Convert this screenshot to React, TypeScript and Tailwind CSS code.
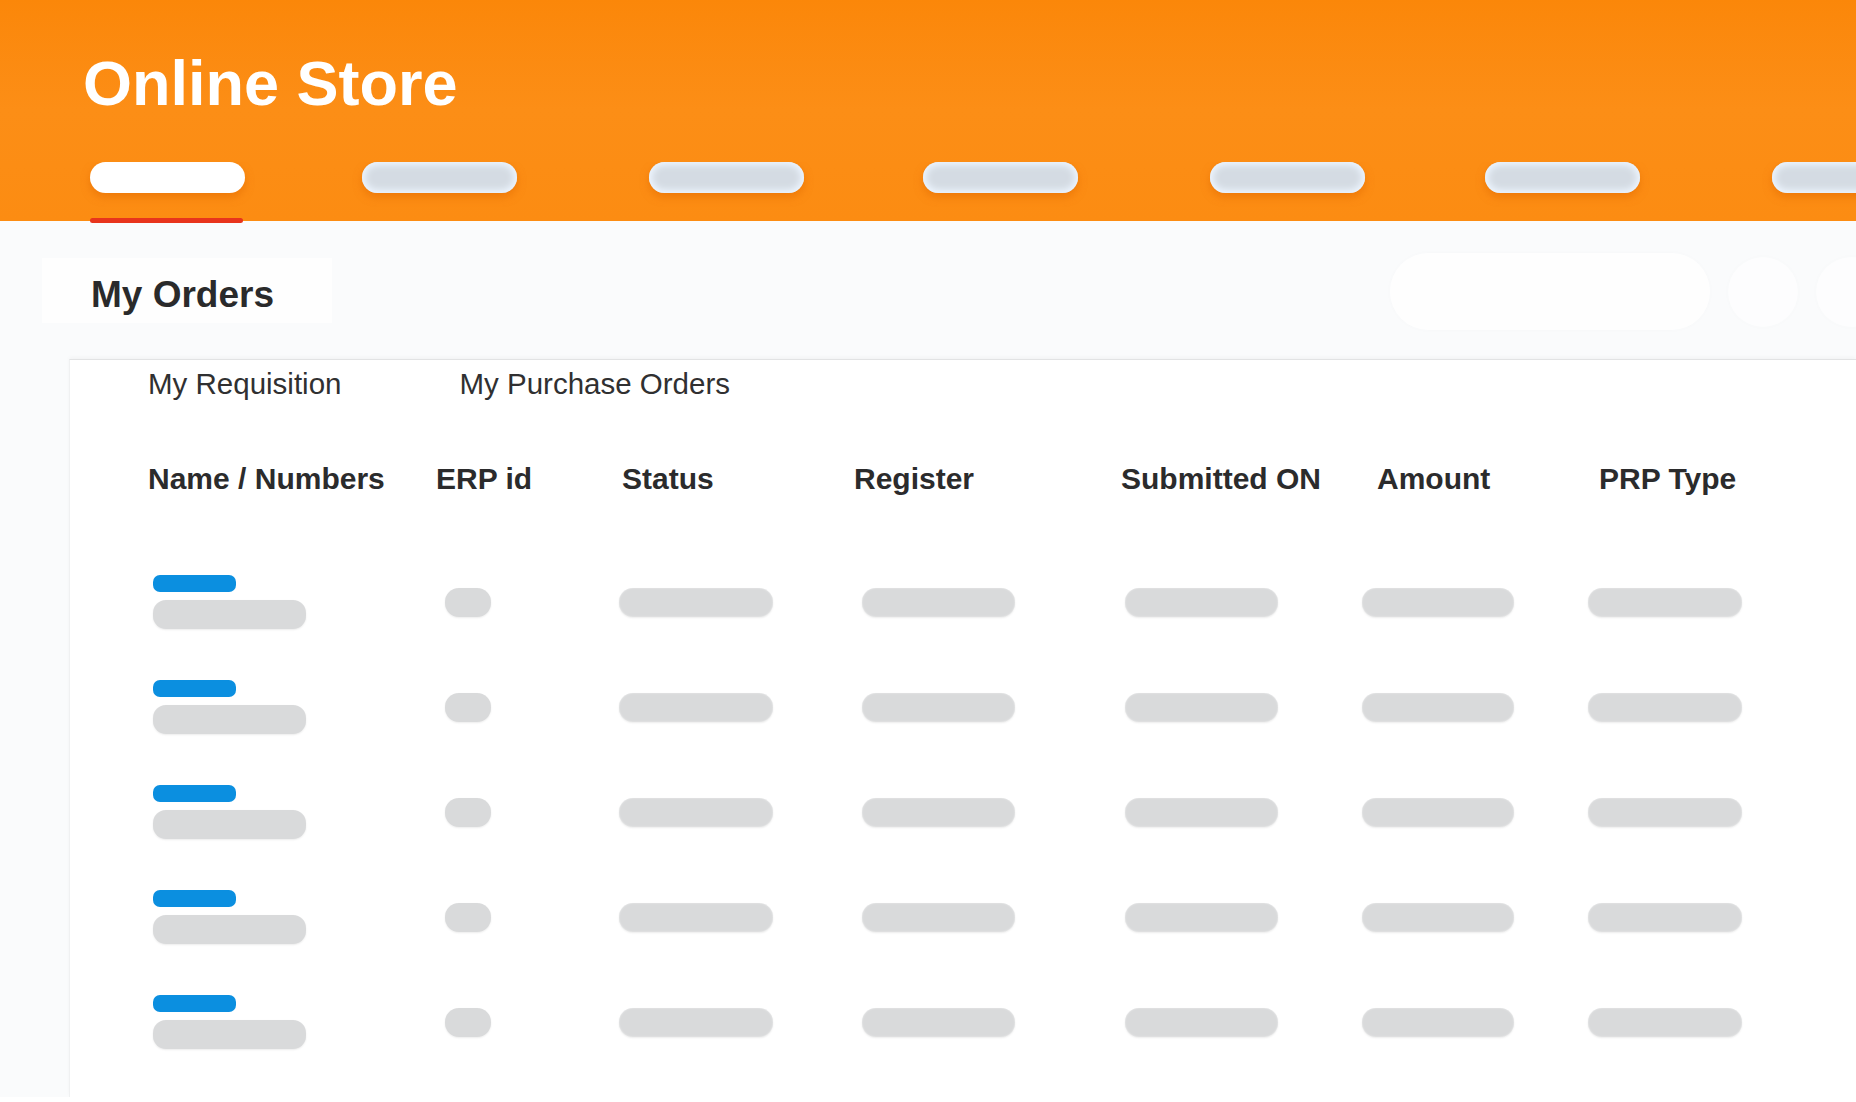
import React from "react";

const font = { fontFamily: '"Liberation Sans", Arial, Helvetica, sans-serif' };

function Pill({ active, ml }: { active?: boolean; ml: string }) {
  return (
    <div className={`${ml} flex shrink-0 flex-col`}>
      {active ? (
        <div className="h-[31px] w-[155px] rounded-full bg-white shadow-[0_4px_8px_rgba(225,105,0,0.55)]" />
      ) : (
        <div className="h-[31px] w-[155px] rounded-full bg-[#d4dbe3] shadow-[inset_0_0_7px_3px_#eef6ff,0_4px_8px_rgba(225,105,0,0.55)]" />
      )}
      <div
        className={
          active
            ? "mt-[25px] h-[5px] w-[153px] rounded-full bg-[#e8341c]"
            : "mt-[25px] h-[5px] w-[153px]"
        }
      />
    </div>
  );
}

function Bar({ w }: { w: string }) {
  return (
    <div
      className={`${w} h-[29px] rounded-[14px] bg-[#d9dadb] shadow-[0_1px_2px_rgba(0,0,0,0.08),inset_0_0_2px_rgba(255,255,255,0.6)]`}
    />
  );
}

function Row() {
  return (
    <div className="flex h-[105px] items-center pl-[83px]">
      <div className="flex w-[292px] shrink-0 flex-col gap-[8px]">
        <div className="h-[17px] w-[83px] rounded-[7px] bg-[#0b8fe0]" />
        <div className="h-[29px] w-[153px] rounded-[13px] bg-[#d9dadb] shadow-[0_1px_2px_rgba(0,0,0,0.08)]" />
      </div>
      <div className="w-[174px] shrink-0">
        <div className="h-[29px] w-[46px] rounded-[14px] bg-[#d9dadb] shadow-[0_1px_2px_rgba(0,0,0,0.08)]" />
      </div>
      <div className="w-[243px] shrink-0">
        <Bar w="w-[154px]" />
      </div>
      <div className="w-[263px] shrink-0">
        <Bar w="w-[153px]" />
      </div>
      <div className="w-[237px] shrink-0">
        <Bar w="w-[153px]" />
      </div>
      <div className="w-[226px] shrink-0">
        <Bar w="w-[152px]" />
      </div>
      <div className="shrink-0">
        <Bar w="w-[154px]" />
      </div>
    </div>
  );
}

export default function App() {
  const headers: [string, string][] = [
    ["Name / Numbers", "w-[288px]"],
    ["ERP id", "w-[186px]"],
    ["Status", "w-[232px]"],
    ["Register", "w-[267px]"],
    ["Submitted ON", "w-[256px]"],
    ["Amount", "w-[222px]"],
    ["PRP Type", "w-[200px]"],
  ];
  return (
    <div className="min-h-[1102px] w-[1856px] overflow-hidden bg-white" style={font}>
      <header className="relative z-10 h-[221px] bg-gradient-to-b from-[#fb8709] via-[#fc8e16] to-[#fc8c12]">
        <h1 className="pl-[83px] pt-[52px] text-[63px] font-bold leading-none text-white">
          Online Store
        </h1>
        <div className="mt-[47px] flex overflow-hidden">
          <Pill active ml="ml-[90px]" />
          <Pill ml="ml-[117px]" />
          <Pill ml="ml-[132px]" />
          <Pill ml="ml-[119px]" />
          <Pill ml="ml-[132px]" />
          <Pill ml="ml-[120px]" />
          <Pill ml="ml-[132px]" />
        </div>
      </header>

      <main className="h-[876px] bg-[#fafbfc] pt-[37px]">
        <div className="flex h-[65px] items-start justify-between">
          <div className="ml-[42px] h-[65px] w-[290px] bg-white/70 pl-[49px] pt-[18px]">
            <h2 className="text-[37px] font-bold leading-none text-[#2a2a2b]">My Orders</h2>
          </div>
          <div className="mr-[-30px] mt-[-5px] flex items-center gap-[18px]">
            <div className="h-[77px] w-[320px] rounded-full bg-white/80 shadow-[0_0_5px_rgba(0,0,0,0.02)]" />
            <div className="h-[70px] w-[70px] rounded-full bg-white/50 shadow-[0_0_5px_rgba(0,0,0,0.02)]" />
            <div className="h-[70px] w-[70px] rounded-full bg-white/50 shadow-[0_0_5px_rgba(0,0,0,0.02)]" />
          </div>
        </div>

        <section className="ml-[69px] mt-[36px] h-[738px] border-l border-t border-l-[#f0f1f2] border-t-[#e2e3e4] bg-white shadow-[0_-2px_4px_rgba(0,0,0,0.03)]">
          <div className="flex pl-[78px] pt-[9px] text-[29.5px] leading-none text-[#303031]">
            <span>My Requisition</span>
            <span className="ml-[118px]">My Purchase Orders</span>
          </div>

          <div className="mt-[65px] flex pl-[78px] text-[30px] font-bold leading-none text-[#2b2b2c]">
            {headers.map(([h, w]) => (
              <div key={h} className={`${w} shrink-0`}>
                {h}
              </div>
            ))}
          </div>

          <div className="mt-[56px]">
            <Row />
            <Row />
            <Row />
            <Row />
            <Row />
          </div>
        </section>
      </main>
    </div>
  );
}
